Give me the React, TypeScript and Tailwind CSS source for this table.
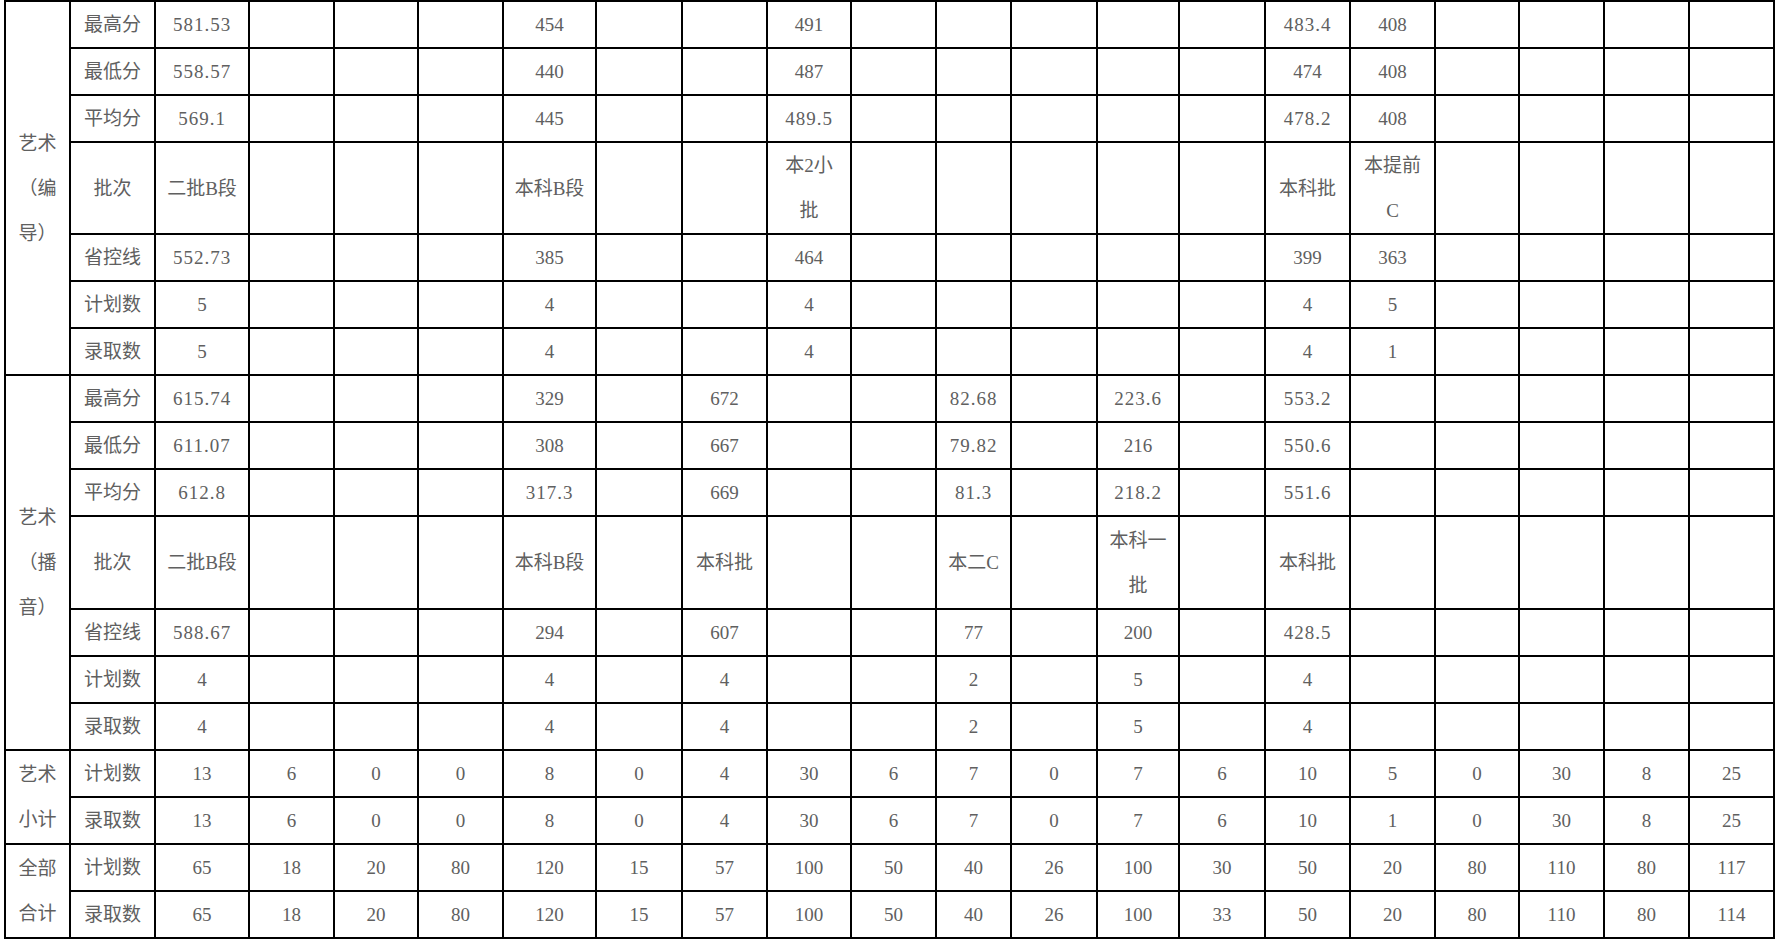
import React from "react";

type Row = { label: string; tall?: boolean; cells: Record<number, string> };

const group1: Row[] = [
  { label: "最高分", cells: { 1: "581.53", 5: "454", 8: "491", 14: "483.4", 15: "408" } },
  { label: "最低分", cells: { 1: "558.57", 5: "440", 8: "487", 14: "474", 15: "408" } },
  { label: "平均分", cells: { 1: "569.1", 5: "445", 8: "489.5", 14: "478.2", 15: "408" } },
  { label: "批次", tall: true, cells: { 1: "二批B段", 5: "本科B段", 8: "本2小\n批", 14: "本科批", 15: "本提前\nC" } },
  { label: "省控线", cells: { 1: "552.73", 5: "385", 8: "464", 14: "399", 15: "363" } },
  { label: "计划数", cells: { 1: "5", 5: "4", 8: "4", 14: "4", 15: "5" } },
  { label: "录取数", cells: { 1: "5", 5: "4", 8: "4", 14: "4", 15: "1" } },
];

const group2: Row[] = [
  { label: "最高分", cells: { 1: "615.74", 5: "329", 7: "672", 10: "82.68", 12: "223.6", 14: "553.2" } },
  { label: "最低分", cells: { 1: "611.07", 5: "308", 7: "667", 10: "79.82", 12: "216", 14: "550.6" } },
  { label: "平均分", cells: { 1: "612.8", 5: "317.3", 7: "669", 10: "81.3", 12: "218.2", 14: "551.6" } },
  { label: "批次", tall: true, cells: { 1: "二批B段", 5: "本科B段", 7: "本科批", 10: "本二C", 12: "本科一\n批", 14: "本科批" } },
  { label: "省控线", cells: { 1: "588.67", 5: "294", 7: "607", 10: "77", 12: "200", 14: "428.5" } },
  { label: "计划数", cells: { 1: "4", 5: "4", 7: "4", 10: "2", 12: "5", 14: "4" } },
  { label: "录取数", cells: { 1: "4", 5: "4", 7: "4", 10: "2", 12: "5", 14: "4" } },
];

const subPlan = [13, 6, 0, 0, 8, 0, 4, 30, 6, 7, 0, 7, 6, 10, 5, 0, 30, 8, 25];
const subAdmit = [13, 6, 0, 0, 8, 0, 4, 30, 6, 7, 0, 7, 6, 10, 1, 0, 30, 8, 25];
const totPlan = [65, 18, 20, 80, 120, 15, 57, 100, 50, 40, 26, 100, 30, 50, 20, 80, 110, 80, 117];
const totAdmit = [65, 18, 20, 80, 120, 15, 57, 100, 50, 40, 26, 100, 33, 50, 20, 80, 110, 80, 114];

const colWidths = [65, 85, 94, 85, 84, 85, 93, 86, 85, 84, 85, 75, 86, 82, 86, 85, 85, 84, 85, 85, 85];

const cellCls =
  "border-2 border-black text-center align-middle px-[10px] py-0 leading-[45px] whitespace-nowrap";

function Content({ text }: { text?: string }) {
  if (!text) return null;
  const lines = text.split("\n");
  const dec = text.includes(".");
  return (
    <span className={dec ? "tracking-[1px]" : ""}>
      {lines.map((l, i) => (
        <React.Fragment key={i}>
          {i > 0 && <br />}
          {l}
        </React.Fragment>
      ))}
    </span>
  );
}

function Group({ rows, head }: { rows: Row[]; head: string }) {
  return (
    <>
      {rows.map((r, i) => (
        <tr key={i} className={r.tall ? "h-[92.4px]" : "h-[46.8px]"}>
          {i === 0 && (
            <td rowSpan={rows.length} className={cellCls}>
              <Content text={head} />
            </td>
          )}
          <td className={cellCls}>{r.label}</td>
          {Array.from({ length: 19 }).map((_, k) => (
            <td key={k} className={cellCls}>
              <Content text={r.cells[k + 1]} />
            </td>
          ))}
        </tr>
      ))}
    </>
  );
}

function SumRows({ head, a, b }: { head: string; a: number[]; b: number[] }) {
  return (
    <>
      <tr className="h-[46.8px]">
        <td rowSpan={2} className={cellCls}>
          <Content text={head} />
        </td>
        <td className={cellCls}>计划数</td>
        {a.map((v, k) => (
          <td key={k} className={cellCls}>
            {v}
          </td>
        ))}
      </tr>
      <tr className="h-[46.8px]">
        <td className={cellCls}>录取数</td>
        {b.map((v, k) => (
          <td key={k} className={cellCls}>
            {v}
          </td>
        ))}
      </tr>
    </>
  );
}

export default function App() {
  return (
    <div className="w-[1778px] h-[940px] overflow-hidden bg-white">
      <table className="ml-[4px] w-[1770px] table-fixed border-collapse border-2 border-black text-[19px] text-[#606060] font-['Liberation_Serif','Noto_Sans_CJK_SC',serif]">
        <colgroup>
          {colWidths.map((w, i) => (
            <col key={i} style={{ width: w }} />
          ))}
        </colgroup>
        <tbody>
          <Group rows={group1} head={"艺术\n（编\n导）"} />
          <Group rows={group2} head={"艺术\n（播\n音）"} />
          <SumRows head={"艺术\n小计"} a={subPlan} b={subAdmit} />
          <SumRows head={"全部\n合计"} a={totPlan} b={totAdmit} />
        </tbody>
      </table>
    </div>
  );
}
